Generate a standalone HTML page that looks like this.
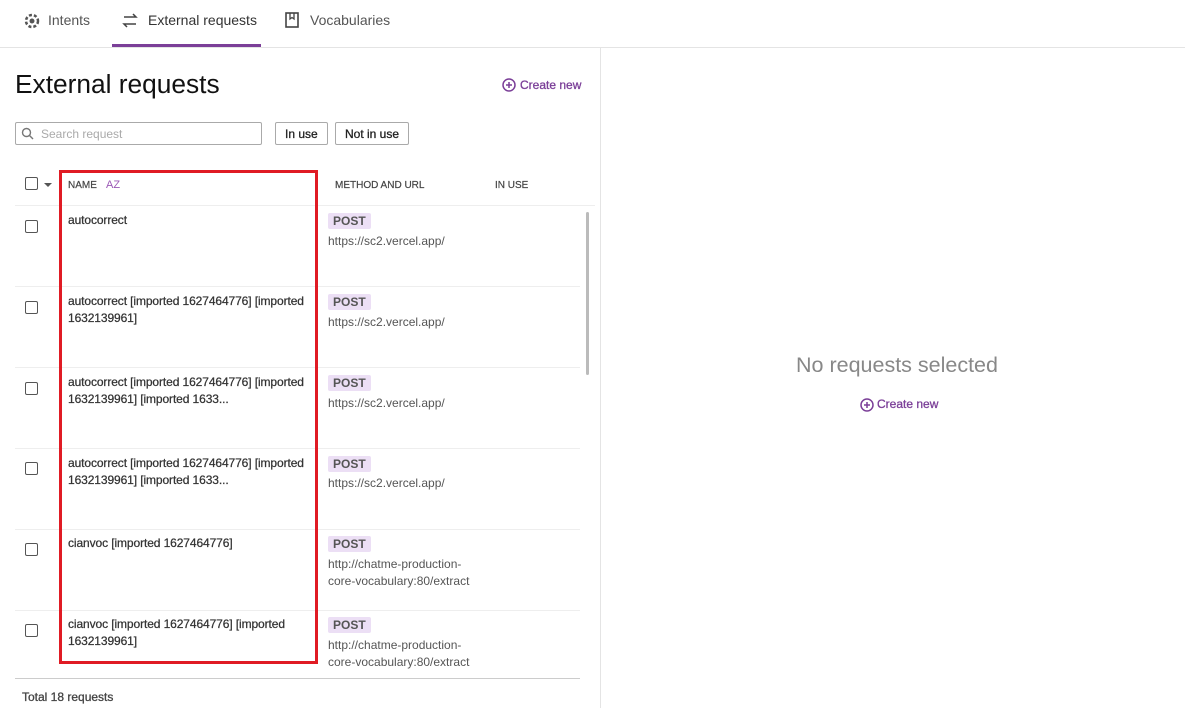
<!DOCTYPE html><html><head><style>
*{box-sizing:border-box;margin:0;padding:0}
body{width:1185px;height:708px;background:#fff;font-family:"Liberation Sans",sans-serif;position:relative;overflow:hidden;color:#333}
.a{position:absolute}
.tab{position:absolute;top:12px;font-size:14px;color:#555}
.cb{position:absolute;width:13px;height:13px;border:1.5px solid #555;border-radius:2px}
.nm{position:absolute;left:68px;width:252px;font-size:12px;line-height:17px;color:#333;letter-spacing:-0.1px;-webkit-text-stroke:0.25px #333}
.post{position:absolute;left:328px;background:#ecdff5;color:#555;font-size:12px;font-weight:bold;padding:1px 5px;border-radius:2px}
.url{position:absolute;left:328px;font-size:12px;color:#555;line-height:17px}
.sep{position:absolute;left:15px;width:565px;height:1px;background:#eee}
.btn{position:absolute;top:122px;height:23px;border:1px solid #aaa;border-radius:2px;font-size:12px;color:#222;padding:4px 9px;-webkit-text-stroke:0.3px #222}
</style></head><body>
<svg class="a" style="left:23px;top:12px" width="18" height="18" viewBox="0 0 18 18"><circle cx="9" cy="9" r="6" fill="none" stroke="#555" stroke-width="2.5" stroke-dasharray="3 2"/><circle cx="9" cy="9" r="2.5" fill="#555"/></svg>
<div class="tab" style="left:48px">Intents</div>
<svg class="a" style="left:121px;top:13px" width="18" height="16" viewBox="0 0 18 16"><path d="M3 4h12l-3-3M15 11H3l3 3" fill="none" stroke="#444" stroke-width="1.5"/></svg>
<div class="tab" style="left:148px;color:#333">External requests</div>
<div class="a" style="left:112px;top:44px;width:149px;height:3px;background:#7b3f98"></div>
<svg class="a" style="left:285px;top:12px" width="14" height="17" viewBox="0 0 14 17"><rect x="1" y="1" width="12" height="14" fill="none" stroke="#444" stroke-width="1.6"/><path d="M5 1v6l2-1.5L9 7V1" fill="none" stroke="#444" stroke-width="1.3"/></svg>
<div class="tab" style="left:310px">Vocabularies</div>
<div class="a" style="left:0;top:47px;width:1185px;height:1px;background:#e4e4e4"></div>
<div class="a" style="left:600px;top:47px;width:1px;height:661px;background:#e4e4e4"></div>
<div class="a" style="left:15px;top:69px;font-size:26.3px;color:#111">External requests</div>
<svg class="a" style="left:502px;top:78px" width="14" height="14"><circle cx="7" cy="7" r="6" fill="none" stroke="#7b3f98" stroke-width="1.5"/><path d="M7 4v6M4 7h6" stroke="#7b3f98" stroke-width="1.5"/></svg>
<div class="a" style="left:520px;top:78px;font-size:12px;color:#7b3f98;-webkit-text-stroke:0.3px #7b3f98">Create new</div>
<div class="a" style="left:15px;top:122px;width:247px;height:23px;border:1px solid #aaa;border-radius:2px"></div>
<svg class="a" style="left:21px;top:127px" width="13" height="13"><circle cx="5.5" cy="5.5" r="4" fill="none" stroke="#777" stroke-width="1.4"/><path d="M8.5 8.5l3.5 3.5" stroke="#777" stroke-width="1.4"/></svg>
<div class="a" style="left:41px;top:127px;font-size:12px;color:#aaa">Search request</div>
<div class="btn" style="left:275px">In use</div>
<div class="btn" style="left:335px">Not in use</div>
<div class="cb" style="left:25px;top:177px"></div>
<div class="a" style="left:44px;top:183px;border:4px solid transparent;border-top:4px solid #555;border-bottom:0"></div>
<div class="a" style="left:68px;top:180px;font-size:10px;color:#444;-webkit-text-stroke:0.2px #444">NAME</div>
<div class="a" style="left:106px;top:179px;font-size:11px;color:#9b59b6">AZ</div>
<div class="a" style="left:335px;top:180px;font-size:10px;color:#444;-webkit-text-stroke:0.2px #444">METHOD AND URL</div>
<div class="a" style="left:495px;top:180px;font-size:10px;color:#444;-webkit-text-stroke:0.2px #444">IN USE</div>
<div class="sep" style="top:205px;width:580px"></div>
<div class="a" style="left:586px;top:212px;width:3px;height:163px;background:#bbb;border-radius:2px"></div>

<div class="cb" style="left:25px;top:220px"></div><div class="nm" style="top:212px">autocorrect</div><div class="post" style="top:213px">POST</div><div class="url" style="top:233px">https://sc2.vercel.app/</div><div class="sep" style="top:286px"></div>
<div class="cb" style="left:25px;top:301px"></div><div class="nm" style="top:293px">autocorrect [imported 1627464776] [imported<br>1632139961]</div><div class="post" style="top:294px">POST</div><div class="url" style="top:314px">https://sc2.vercel.app/</div><div class="sep" style="top:367px"></div>
<div class="cb" style="left:25px;top:382px"></div><div class="nm" style="top:374px">autocorrect [imported 1627464776] [imported<br>1632139961] [imported 1633...</div><div class="post" style="top:375px">POST</div><div class="url" style="top:395px">https://sc2.vercel.app/</div><div class="sep" style="top:448px"></div>
<div class="cb" style="left:25px;top:462px"></div><div class="nm" style="top:455px">autocorrect [imported 1627464776] [imported<br>1632139961] [imported 1633...</div><div class="post" style="top:456px">POST</div><div class="url" style="top:475px">https://sc2.vercel.app/</div><div class="sep" style="top:529px"></div>
<div class="cb" style="left:25px;top:543px"></div><div class="nm" style="top:535px">cianvoc [imported 1627464776]</div><div class="post" style="top:536px">POST</div><div class="url" style="top:556px">http://chatme-production-<br>core-vocabulary:80/extract</div><div class="sep" style="top:610px"></div>
<div class="cb" style="left:25px;top:624px"></div><div class="nm" style="top:616px">cianvoc [imported 1627464776] [imported<br>1632139961]</div><div class="post" style="top:617px">POST</div><div class="url" style="top:637px">http://chatme-production-<br>core-vocabulary:80/extract</div>

<div class="a" style="left:59px;top:170px;width:259px;height:494px;border:3px solid #e01b24"></div>
<div class="a" style="left:15px;top:678px;width:565px;height:1px;background:#ccc"></div>
<div class="a" style="left:22px;top:690px;font-size:12px;color:#444;-webkit-text-stroke:0.3px #444">Total 18 requests</div>

<div class="a" style="left:796px;top:353px;font-size:21.5px;color:#888">No requests selected</div>
<svg class="a" style="left:860px;top:398px" width="14" height="14"><circle cx="7" cy="7" r="6" fill="none" stroke="#7b3f98" stroke-width="1.5"/><path d="M7 4v6M4 7h6" stroke="#7b3f98" stroke-width="1.5"/></svg>
<div class="a" style="left:877px;top:397px;font-size:12px;color:#7b3f98;-webkit-text-stroke:0.3px #7b3f98">Create new</div>
</body></html>
